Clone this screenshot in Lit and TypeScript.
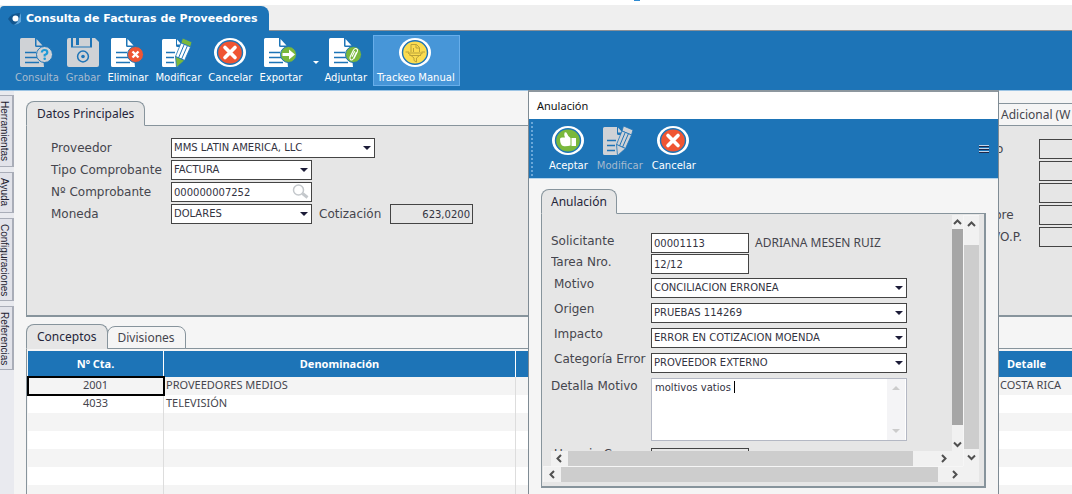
import { LitElement, html, svg, css, nothing, type TemplateResult } from "lit";
import { customElement, property } from "lit/decorators.js";
import { classMap } from "lit/directives/class-map.js";

const BLUE = "#1d74b7";
const GREEN = "#7ab83c";
const RED = "#ef5533";
const GREY = "#cfd2d6";

const sheet = (fill: string) => svg`
  <path fill=${fill} d="M1.5 0H15V7.5Q15 9 16.500 9H22V9.500L24 29H1.500Q0 29 0 27.500V1.500Q0 0 1.500 0Z"/>
  <path fill=${fill} d="M16.500 1L22.500 7.500H16.500Z"/>
  <path stroke=${BLUE} stroke-width="1.600" d="M5 14.500H16M5 19.500H17M5 24.500H19"/>`;

const badge = (fill: string) => svg`
  <circle cx="24.500" cy="16.500" r="8" fill=${fill} stroke=${BLUE} stroke-width="1"/>`;

const pencilSheet = (paper: string, tip: string, body: string) => svg`
  <path fill=${paper} d="M1.500 1H14V7.500Q14 9 15.500 9H19L16 29H1.500Q0 29 0 27.500V2.500Q0 1 1.500 1Z"/>
  <path fill=${paper} d="M15 1.500L19.500 6.500H15Z"/>
  <path stroke=${BLUE} stroke-width="1.600" d="M4 14.500H13M4 19.500H12M4 24.500H12"/>
  <path fill=${tip} stroke=${BLUE} stroke-width="0.800" d="M20.500 0L30 4L28.500 9L19 5Z"/>
  <path fill=${body} stroke=${BLUE} stroke-width="0.800" d="M19 5L28.500 9L22.500 22.500L13.500 18.500Z"/>
  <path stroke=${BLUE} stroke-width="1" d="M22.200 6.500L16.500 20M25.400 7.800L19.500 21.300"/>
  <path fill=${tip} stroke=${BLUE} stroke-width="0.800" d="M13.500 18.500L22.500 22.500L14.500 29.500Z"/>`;

const disc = (fill: string, ring = "#fff") => svg`
  <ellipse cx="16" cy="14.500" rx="16" ry="14.500" fill=${ring}/>
  <ellipse cx="16" cy="14.500" rx="12.500" ry="11.700" fill=${fill} stroke=${BLUE} stroke-width="1.400"/>`;

const ICONS: Record<string, unknown> = {
  consulta: svg`${sheet(GREY)}${badge(GREY)}
    <path fill="none" stroke="#1f9ad6" stroke-width="2.200" d="M21.800 14.500Q22 12 24.600 12Q27.300 12 27.300 14.300Q27.300 16 24.700 17V18.500"/>
    <circle cx="24.700" cy="20.800" r="1.300" fill="#1f9ad6"/>`,
  grabar: svg`
    <path fill=${GREY} d="M2 0H4V9.500H25V0H28L32 4V27Q32 29 30 29H2Q0 29 0 27V2Q0 0 2 0Z"/>
    <path fill=${GREY} d="M12 0H23V8H12ZM6 0H9V8H6Z"/>
    <path fill=${GREY} d="M6 7H23V8.500H6Z"/>
    <circle cx="16" cy="18.500" r="5.400" fill="none" stroke=${BLUE} stroke-width="1.500"/>
    <circle cx="16" cy="18.500" r="1.800" fill=${BLUE}/>`,
  eliminar: svg`${sheet("#fff")}${badge(RED)}
    <path stroke="#fff" stroke-width="2.400" d="M21.500 13.500L27.500 19.500M27.500 13.500L21.500 19.500"/>`,
  modificar: pencilSheet("#fff", GREEN, "#fff"),
  modificarGris: pencilSheet(GREY, GREY, GREY),
  cancelar: svg`${disc(RED)}
    <path stroke="#fff" stroke-width="3.600" stroke-linecap="round" d="M11 9.500L21 19.500M21 9.500L11 19.500"/>`,
  exportar: svg`${sheet("#fff")}${badge(GREEN)}
    <path fill="#fff" d="M18.500 15H25V11.500L31 16.500L25 21.500V18H18.500Z"/>`,
  adjuntar: svg`${sheet("#fff")}${badge(GREEN)}
    <path fill="none" stroke="#fff" stroke-width="1.100" d="M27.500 14L24.500 20.500Q23 22.800 21.500 21.500Q20.500 20.500 21.200 18.800L24.500 12Q26 9.800 27.700 10.800Q29.200 11.800 28.300 13.800L25 20.500M23 18.800L25.700 13.200"/>`,
  trackeo: svg`${disc("#fbdc4f")}
    <path fill="none" stroke="#b9a23a" stroke-width="1" d="M12 14V6.500H17.500L20.500 9.500V14M17 6.500V10H20.500M14.500 14V10M9 15H23.500L17.500 20V24L15 22.500V20ZM10.500 17.500H22M6.500 14H10M22.500 14H26"/>`,
  aceptar: svg`${disc(GREEN)}
    <path fill="#fff" d="M8 13Q8 11.500 10 11.500L13 11.500Q11.800 8 12.600 6.500Q14 5.500 15 7.500Q16 10.500 18.500 12V19.500Q16 20.500 12 20.300Q9.500 20 9 18Q8 15.500 8 13Z"/>
    <path fill="#fff" d="M19.500 12H24V20H19.500Z"/>`,
};

@customElement("tool-button")
class ToolButton extends LitElement {
  @property() icon = "";
  @property() label = "";
  @property({ type: Boolean }) off = false;
  @property({ type: Boolean }) active = false;

  static styles = css`
    :host { display: block; }
    button {
      display: flex; flex-direction: column; align-items: center; gap: 3px;
      height: 51px; margin: 0; padding: 2px 2px 0 3px; border: 1px solid transparent;
      background: none; color: #fff; white-space: nowrap;
      font: 10px/14px "DejaVu Sans", sans-serif;
    }
    button.off { color: #a6bace; }
    button.active { background: #4796d8; border-color: #68aeea; padding: 2px 4px 2px 3px; margin-left: 3px; }
    svg { display: block; width: 33px; height: 30px; overflow: visible; }
  `;

  render() {
    return html`<button
      type="button"
      ?disabled=${this.off}
      class=${classMap({ off: this.off, active: this.active })}
    >
      <svg viewBox="0 0 33 30" aria-hidden="true">${ICONS[this.icon]}</svg>
      <span>${this.label}</span>
    </button>`;
  }
}

const ARROWS: Record<string, string> = {
  up: "M1 6L4.500 2.500L8 6",
  down: "M1 2.500L4.500 6L8 2.500",
  left: "M6 1L2.500 4.500L6 8",
  right: "M3 1L6.500 4.500L3 8",
};

@customElement("scroll-rail")
class ScrollRail extends LitElement {
  @property({ type: Boolean }) vertical = false;

  static styles = css`
    :host { display: flex; background: #f1f1f1; min-width: 0; min-height: 0; }
    :host([vertical]) { flex-direction: column; }
    button {
      flex: none; display: grid; place-items: center; border: 0; padding: 0;
      background: none; width: 17px; height: 100%;
    }
    :host([vertical]) button { width: 100%; height: var(--step, 17px); }
    .track { flex: 1; display: flex; min-height: 0; padding-top: var(--lead, 0); }
    :host([vertical]) .track { flex-direction: column; }
    .thumb { flex: none; background: var(--thumb, #cdcdcd); width: var(--size); }
    :host([vertical]) .thumb { width: auto; height: var(--size); }
    svg { width: 9px; height: 9px; }
  `;

  render() {
    const [a, b] = this.vertical ? ["up", "down"] : ["left", "right"];
    const arrow = (d: string) => html`<button type="button" tabindex="-1" aria-label=${d}>
      <svg viewBox="0 0 9 9"><path fill="none" stroke="#505050" stroke-width="2" d=${ARROWS[d]} /></svg>
    </button>`;
    return html`${arrow(a)}<div class="track"><div class="thumb"></div></div>${arrow(b)}`;
  }
}

const shared = css`
  * { box-sizing: border-box; }
  input, select, textarea {
    appearance: none; display: block; width: 100%; height: 20px; margin: 0; padding: 0 2px;
    border: 1px solid #444; border-radius: 0; background: #fff;
    color: #33333f; font: 10px/18px "DejaVu Sans", sans-serif; outline: 0;
  }
  label { font: 12px/20px "DejaVu Sans", sans-serif; color: #45454d; white-space: nowrap; }
  .combo { position: relative; display: block; }
  .combo::after {
    content: ""; position: absolute; right: 4px; top: 8px; pointer-events: none;
    border: 4px solid transparent; border-top-color: #1c1c38; border-bottom: 0;
  }
  .tabs { display: flex; align-items: flex-end; position: relative; margin-bottom: -1px; }
  .tab {
    height: 25px; padding: 0 10px; border: 1px solid #87949c; border-radius: 8px 8px 0 0;
    background: #f5f5f5; color: #45454d; font: 12px/22px "Noto Sans", sans-serif; white-space: nowrap; margin: 0;
  }
  .tab.on { background: #e6e6e6; border-bottom-color: #e6e6e6; color: #25253a; }
`;

const combo = (id: string, value: string) => html`<span class="combo">
  <select id=${id}><option>${value}</option></select>
</span>`;

@customElement("anulacion-dialog")
class AnulacionDialog extends LitElement {
  static styles = [shared, css`
    :host {
      display: flex; flex-direction: column; background: #f5f5f5;
      border: 1px solid #7f8b94; border-top: 2px solid #8d979e; border-bottom: 0;
    }
    h2 { margin: 0; padding: 0 8px; background: #fff; font: 11px/27px "Noto Sans", sans-serif; color: #111; }
    .bar {
      display: flex; align-items: center; gap: 2px; height: 60px; padding: 0 9px 0 2px;
      background: #1d74b7; border-bottom: 1px solid #b5d4ec;
    }
    .grip { align-self: stretch; margin: 3px 10px 2px 0; border-left: 2px dotted #6aa7d8; }
    .bar button { margin: 0 0 0 auto; padding: 0; border: 0; background: none; width: 10px; height: 10px; }
    .bar button svg { display: block; }
    .body { flex: 1; min-height: 0; display: flex; flex-direction: column; padding: 10px 12px 0; }
    .body .tab { padding: 0 9px; }
    .panel {
      height: 275px; border: 1px solid #87949c; border-right-width: 2px; border-bottom-width: 2px;
      background: #e6e6e6; padding: 1px 5px 4px 1px;
    }
    .outer { display: grid; height: 100%; grid-template: minmax(0, 1fr) 16px / minmax(0, 1fr) 16px; }
    .inner {
      display: grid; grid-template: minmax(0, 1fr) 15px / minmax(0, 1fr) 11px;
      padding-left: 8px; overflow: hidden; min-height: 0;
    }
    .corner { background: #f1f1f1; }
    .outer > scroll-rail { border: solid #f6f6f6; border-width: 1px 0 0 1px; }
    .form { overflow: hidden; padding-top: 18px; }
    .row { display: grid; grid-template-columns: 100px minmax(0, 256px); margin-bottom: 5px; }
    .row.tight { margin-bottom: 1px; }
    .row.near { margin-bottom: 4px; }
    .row.far { margin-bottom: 7px; }
    .row label { line-height: 16px; }
    .row.wide label { line-height: 12px; padding-left: 3px; }
    .pair { display: flex; align-items: center; gap: 6px; }
    .pair input { width: 98px; }
    .pair output { font: 12px/18px "Noto Sans", sans-serif; color: #45454d; white-space: nowrap; }
    .memo { position: relative; display: flex; height: 63px; border: 1px solid #b4b8c4; background: #fff; }
    .memo textarea { flex: 1; height: 100%; border: 0; padding: 0 3px; resize: none; overflow: hidden; }
    .memo .rail {
      width: 18px; margin-right: 1px; padding: 7px 0; background: #f4f4f6;
      display: flex; flex-direction: column; align-items: center; justify-content: space-between;
    }
    .rail i { border: 4px solid transparent; }
    .rail i:first-child { border-bottom-color: #ccc; border-top: 0; }
    .rail i:last-child { border-top-color: #ccc; border-bottom: 0; }
    .caret { position: absolute; left: 82px; top: 2px; width: 1px; height: 12px; background: #000; }
    input[readonly] { background: #e6e6e6; }
    .v-outer { --lead: 12px; --size: 100%; }
    .v-inner { --size: 94%; --step: 14px; --thumb: #a6a6a6; }
    .h-outer { --size: 98%; }
    .h-inner { --size: 94%; }
  `];

  render() {
    return html`
      <h2>Anulación</h2>
      <div class="bar">
        <span class="grip"></span>
        <tool-button icon="aceptar" label="Aceptar"></tool-button>
        <tool-button icon="modificarGris" label="Modificar" off></tool-button>
        <tool-button icon="cancelar" label="Cancelar"></tool-button>
        <button type="button" aria-label="Opciones">
          <svg width="10" height="10" viewBox="0 0 10 10">
            <path stroke="#c4d6ea" d="M0 1.500H10M0 4.500H10M0 7.500H10" />
            <path stroke="#1f2747" d="M0 2.500H10M0 5.500H10M0 8.500H10" />
          </svg>
        </button>
      </div>
      <div class="body">
        <div class="tabs"><button type="button" class="tab on">Anulación</button></div>
        <div class="panel">
          <div class="outer">
            <div class="inner">
              <div class="form">
                <div class="row tight">
                  <label for="sol">Solicitante</label>
                  <div class="pair"><input id="sol" value="00001113" /><output for="sol">ADRIANA MESEN RUIZ</output></div>
                </div>
                <div class="row near">
                  <label for="tarea">Tarea Nro.</label>
                  <div class="pair"><input id="tarea" value="12/12" /></div>
                </div>
                ${[
                  ["motivo", "Motivo", "CONCILIACION ERRONEA"],
                  ["origen", "Origen", "PRUEBAS 114269"],
                  ["impacto", "Impacto", "ERROR EN COTIZACION MOENDA"],
                  ["categoria", "Categoría Error", "PROVEEDOR EXTERNO"],
                ].map(([id, label, value]) => html`<div class="row wide">
                  <label for=${id}>${label}</label>${combo(id, value)}
                </div>`)}
                <div class="row far">
                  <label for="detalle">Detalla Motivo</label>
                  <div class="memo">
                    <textarea id="detalle" .value=${"moltivos vatios "}></textarea>
                    <span class="rail"><i></i><i></i></span>
                    <span class="caret"></span>
                  </div>
                </div>
                <div class="row wide">
                  <label for="usuario">Usuario C</label>
                  <div class="pair"><input id="usuario" readonly /></div>
                </div>
              </div>
              <scroll-rail class="v-inner" vertical></scroll-rail>
              <scroll-rail class="h-inner"></scroll-rail>
              <span class="corner"></span>
            </div>
            <scroll-rail class="v-outer" vertical></scroll-rail>
            <scroll-rail class="h-outer"></scroll-rail>
            <span class="corner"></span>
          </div>
        </div>
      </div>`;
  }
}

@customElement("app-root")
class AppRoot extends LitElement {
  static styles = [shared, css`
    :host {
      position: relative; display: flex; flex-direction: column; height: 100vh; overflow: hidden;
      background: #f5f5f5;
    }
    .edge { flex: none; height: 5px; background: linear-gradient(#2f8bd2, #2f8bd2) 634px 0 / 6px 1px no-repeat #fff; }
    .strip { flex: none; display: flex; height: 26px; background: #efefef; border-bottom: 1px solid #8a9097; }
    h1 {
      display: flex; align-items: center; gap: 4px; height: 26px; margin: 1px 0 0; padding: 0 11px 0 7px;
      border-radius: 4px 8px 0 0; background: #1d74b7; color: #fff;
      font: bold 11px/24px "DejaVu Sans", sans-serif; white-space: nowrap;
    }
    .tools {
      flex: none; display: flex; align-items: flex-start; gap: 0; height: 60px; padding: 4px 11px 0;
      background: #1d74b7; border-bottom: 1px solid #9cc4e4;
    }
    .more { align-self: center; padding: 0; margin: 0 1px 0 8px; border: 3px solid transparent; border-top-color: #fff; border-bottom: 0; background: none; width: 6px; height: 3px; }
    .main { flex: 1; display: flex; min-height: 0; }
    .side { flex: none; width: 14px; background: #e9eaef; display: flex; flex-direction: column; gap: 5px; }
    .side button {
      writing-mode: vertical-rl; width: 14px; padding: 5px 0 5px; border: 1px solid #a9adb8; border-left: 0;
      border-right-width: 2px; background: #e2e3ea; color: #222230; margin: 0;
      font: 10px/9px "Liberation Sans", sans-serif; text-align: left; display: flex; align-items: flex-end;
    }
    .side .first { margin-top: 4px; height: 72px; }
    .side .s2 { height: 41px; } .side .s3 { height: 83px; } .side .s4 { height: 64px; }
    .content { flex: 1; min-width: 0; display: flex; flex-direction: column; padding: 10px 0 0 12px; }
    .tab.cut { margin-left: auto; height: 23px; width: 92px; padding: 0 0 0 20px; border-right: 0; border-radius: 0; text-align: left; overflow: hidden; }
    .panel {
      flex: none; display: flex; justify-content: space-between; height: 192px; padding: 12px 0 0 24px;
      background: #e6e6e6; border: solid #87949c; border-width: 1px 0 2px 1px;
    }
    .fields { display: grid; grid-template-columns: 120px auto; row-gap: 2px; align-content: start; }
    .short { width: 141px; } .long { width: 204px; }
    .find { position: relative; }
    .find svg { position: absolute; right: 3px; top: 2px; }
    .rate { display: flex; align-items: center; }
    .rate label { width: 78px; padding-left: 7px; }
    .rate .amount { width: 83px; background: #e6e6e6; text-align: right; }
    .right { display: grid; grid-template-columns: 48px 33px; row-gap: 2px; align-content: start; padding-top: 1px; overflow: hidden; }
    .right input { width: 60px; background: #e6e6e6; }
    .right label { padding-left: 3px; }
    .right .in { padding-left: 5px; }
    .lower { flex: 1; min-height: 0; display: flex; flex-direction: column; padding-top: 7px; }
    .low { height: 23px; margin-left: -1px; }
    .grid { flex: 1; min-height: 0; overflow: hidden; border-left: 1px solid #87949c; border-top: 1px solid #87949c; padding: 2px 0 0 1px; }
    table { width: 100%; border-collapse: separate; border-spacing: 0; table-layout: fixed; }
    th {
      height: 26px; padding: 0; background: #1d74b7; color: #fff; border-right: 1px solid #fff;
      font: bold 11px/26px "Noto Sans", sans-serif;
    }
    td {
      height: 18px; padding: 0 2px; border-right: 1px solid #ddd; color: #45454d; white-space: nowrap;
      font: 11px/16px "Noto Sans", sans-serif; overflow: hidden; vertical-align: top;
    }
    th:last-child, td:last-child { border-right: 0; }
    .c1 { width: 136px; } .c2 { width: 352px; } .c4 { width: 74px; }
    th.c4 { text-align: left; padding-left: 9px; }
    tbody tr { background: #fff; }
    tbody tr:nth-child(odd) { background: #f4f4f4; }
    td.num { text-align: center; }
    td.cur { outline: 2px solid #000; outline-offset: -1px; }
    anulacion-dialog { position: absolute; left: 528px; top: 90px; bottom: 0; width: 471px; }
  `];

  private rows: [string, string, string][] = [
    ["2001", "PROVEEDORES MEDIOS", "COSTA RICA"],
    ["4033", "TELEVISIÓN", ""],
    ...Array.from({ length: 24 }, () => ["", "", ""] as [string, string, string]),
  ];

  private sideTab(label: string, cls: string): TemplateResult {
    return html`<button type="button" class=${cls}>${label}</button>`;
  }

  render() {
    return html`
      <div class="edge"></div>
      <header class="strip">
        <h1>
          <svg width="15" height="14" viewBox="0 0 15 14" aria-hidden="true">
            <path fill="#12568f" d="M1 7Q4 1 13 1L14 3V10Q10 14 5 12Z" />
            <path fill="#5fa6dc" d="M13 1L14 3V10Q11 13 7 13Q13 9 13 1Z" />
            <circle cx="8.500" cy="6.500" r="3" fill="#fff" />
          </svg>
          Consulta de Facturas de Proveedores
        </h1>
      </header>
      <nav class="tools">
        <tool-button icon="consulta" label="Consulta" off></tool-button>
        <tool-button icon="grabar" label="Grabar" off></tool-button>
        <tool-button icon="eliminar" label="Eliminar"></tool-button>
        <tool-button icon="modificar" label="Modificar"></tool-button>
        <tool-button icon="cancelar" label="Cancelar"></tool-button>
        <tool-button icon="exportar" label="Exportar"></tool-button>
        <button type="button" class="more" aria-label="Más formatos"></button>
        <tool-button icon="adjuntar" label="Adjuntar"></tool-button>
        <tool-button icon="trackeo" label="Trackeo Manual" active></tool-button>
      </nav>
      <div class="main">
        <aside class="side">
          ${this.sideTab("Herramientas", "first")} ${this.sideTab("Ayuda", "s2")}
          ${this.sideTab("Configuraciones", "s3")} ${this.sideTab("Referencias", "s4")}
        </aside>
        <main class="content">
          <div class="tabs">
            <button type="button" class="tab on">Datos Principales</button>
            <button type="button" class="tab cut">Adicional (W</button>
          </div>
          <section class="panel">
            <div class="fields">
              <label for="prov">Proveedor</label>
              <div class="long">${combo("prov", "MMS LATIN AMERICA, LLC")}</div>
              <label for="tipo">Tipo Comprobante</label>
              <div class="short">${combo("tipo", "FACTURA")}</div>
              <label for="nro">Nº Comprobante</label>
              <div class="short find">
                <input id="nro" value="000000007252" />
                <svg width="17" height="15" viewBox="0 0 17 15" aria-hidden="true">
                  <circle cx="6.500" cy="6" r="5" fill="none" stroke="#c4c8cc" stroke-width="1.500" />
                  <path stroke="#c4c8cc" stroke-width="3" d="M10.500 9.500L15.500 13.500" />
                </svg>
              </div>
              <label for="moneda">Moneda</label>
              <div class="rate">
                <div class="short">${combo("moneda", "DOLARES")}</div>
                <label for="cot">Cotización</label>
                <input id="cot" class="amount" readonly value="623,0200" />
              </div>
            </div>
            <div class="right">
              ${["o", "", "", "bre", "/O.P."].map((t, i) => html`
                <label for="r${i}" class=${t === "bre" ? "" : "in"}>${t || nothing}</label>
                <input id="r${i}" readonly />`)}
            </div>
          </section>
          <section class="lower">
            <div class="tabs">
              <button type="button" class="tab on">Conceptos</button>
              <button type="button" class="tab low">Divisiones</button>
            </div>
            <div class="grid">
              <table>
                <thead>
                  <tr><th class="c1">Nº Cta.</th><th class="c2">Denominación</th><th></th><th class="c4">Detalle</th></tr>
                </thead>
                <tbody>
                  ${this.rows.map(([n, d, x], i) => html`<tr>
                    <td class=${classMap({ num: true, cur: i === 0 })}>${n}</td><td>${d}</td><td></td><td>${x}</td>
                  </tr>`)}
                </tbody>
              </table>
            </div>
          </section>
        </main>
      </div>
      <anulacion-dialog role="dialog" aria-label="Anulación"></anulacion-dialog>`;
  }
}
